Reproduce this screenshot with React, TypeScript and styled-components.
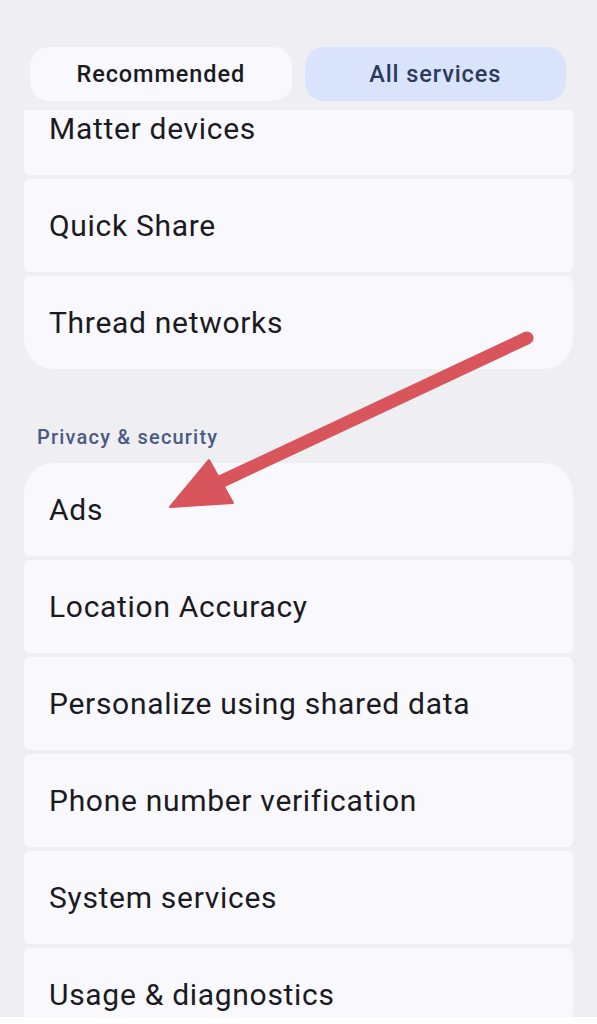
import * as React from 'react';
import styled, { createGlobalStyle } from 'styled-components';

const GlobalStyle = createGlobalStyle`
    html, body {
        margin: 0;
        padding: 0;
        background: #eeeef3;
    }
    body {
        font-family: Roboto, "Noto Sans", Arial, sans-serif;
        color: #1b1b1f;
    }
`;

const Page = styled.div`
    position: relative;
    width: 597px;
    height: 1024px;
    display: flex;
    flex-direction: column;
    overflow: hidden;
    background: #eeeef3;
`;

const Header = styled.div`
    flex: none;
    position: relative;
    z-index: 1;
    height: 110px;
    box-sizing: border-box;
    padding: 47px 31px 0 30px;
    display: grid;
    grid-template-columns: 1fr 1fr;
    grid-auto-rows: 54px;
    column-gap: 13px;
    background: #eeeef3;
`;

const Tab = styled.div<{ $active?: boolean }>`
    display: flex;
    align-items: center;
    justify-content: center;
    border-radius: 19px;
    font-size: 23.5px;
    font-weight: 500;
    letter-spacing: 0.9px;
    background: ${(p) => (p.$active ? '#d9e3fb' : '#f8f8fd')};
    color: ${(p) => (p.$active ? '#2c3a5e' : '#1b1b1f')};
`;

const Viewport = styled.div`
    flex: 1;
    overflow: hidden;
    padding: 0 24px;
`;

const Scroller = styled.div`
    margin-top: -28px;
`;

const Group = styled.div`
    display: flex;
    flex-direction: column;
    gap: 4px;
    border-radius: 30px;
    overflow: hidden;
`;

const Row = styled.div`
    height: 93px;
    flex: none;
    display: flex;
    align-items: center;
    padding-left: 25px;
    border-radius: 6px;
    background: #f8f8fd;
    font-size: 30px;
    letter-spacing: 0.7px;
    color: #1b1b1f;
`;

const SectionTitle = styled.div`
    margin: 56px 0 14px;
    padding-left: 13px;
    height: 24px;
    line-height: 24px;
    font-size: 20px;
    font-weight: 500;
    letter-spacing: 1.2px;
    color: #4a5a86;
`;

const NavBar = styled.div`
    flex: none;
    height: 7px;
    background: #ffffff;
`;

const ArrowLayer = styled.svg`
    position: absolute;
    top: 0;
    left: 0;
    z-index: 2;
    pointer-events: none;
`;

const connectivity = ['Matter devices', 'Quick Share', 'Thread networks'];
const privacy = [
    'Ads',
    'Location Accuracy',
    'Personalize using shared data',
    'Phone number verification',
    'System services',
    'Usage & diagnostics',
];

export default function App() {
    return (
        <Page>
            <GlobalStyle />
            <Header>
                <Tab>Recommended</Tab>
                <Tab $active>All services</Tab>
            </Header>
            <Viewport>
                <Scroller>
                    <Group>
                        {connectivity.map((label) => (
                            <Row key={label}>{label}</Row>
                        ))}
                    </Group>
                    <SectionTitle>Privacy &amp; security</SectionTitle>
                    <Group>
                        {privacy.map((label) => (
                            <Row key={label}>{label}</Row>
                        ))}
                    </Group>
                </Scroller>
            </Viewport>
            <NavBar />
            <ArrowLayer width="597" height="1024" viewBox="0 0 597 1024">
                <line
                    x1="527"
                    y1="338"
                    x2="218"
                    y2="483"
                    stroke="#d8555c"
                    strokeWidth="13"
                    strokeLinecap="round"
                />
                <polygon
                    points="170,507 209,460 233,503"
                    fill="#d8555c"
                    stroke="#d8555c"
                    strokeWidth="2"
                    strokeLinejoin="round"
                />
            </ArrowLayer>
        </Page>
    );
}
